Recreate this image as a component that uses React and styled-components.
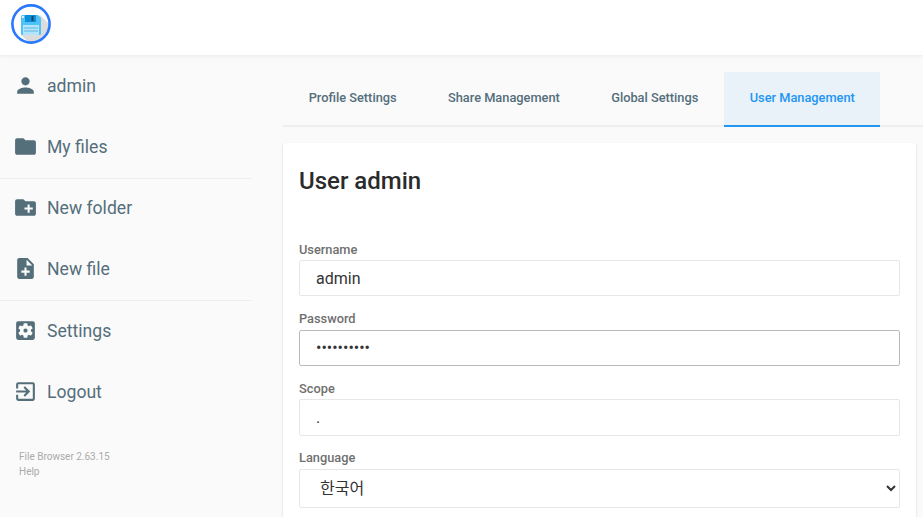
import React from "react";
import styled, { createGlobalStyle } from "styled-components";
import {
  MdPerson,
  MdFolder,
  MdCreateNewFolder,
  MdNoteAdd,
  MdSettingsApplications,
  MdExitToApp,
} from "react-icons/md";

const GlobalStyle = createGlobalStyle`
  html, body {
    margin: 0;
    height: 100%;
    overflow: hidden;
    background: #fafafa;
    font-family: Roboto, "Liberation Sans", sans-serif;
  }
  * { box-sizing: border-box; }
`;

const Logo = () => (
  <svg width="40" height="40" viewBox="0 0 40 40">
    <defs>
      <clipPath id="logo-disc">
        <circle cx="20" cy="20" r="18" />
      </clipPath>
    </defs>
    <circle cx="20" cy="20" r="18" fill="#fff" />
    <path d="M29 11 L42 24 V42 H22 L10 31z" fill="#dcdcdc" clipPath="url(#logo-disc)" />
    <path d="M10 12.5 Q10 11 11.5 11 H27 L30 14 V29.5 Q30 31 28.5 31 H11.5 Q10 31 10 29.5z" fill="#4fc3f7" />
    <rect x="14" y="11" width="11" height="7" fill="#0d8fd8" />
    <rect x="20.5" y="12" width="2" height="5" fill="#17466b" />
    <rect x="11" y="12" width="2" height="2" fill="#e1f5fe" />
    <rect x="12" y="21" width="16" height="10" fill="#b3e5fc" />
    <rect x="13" y="23.5" width="14" height="1" fill="#5fb4e0" />
    <rect x="13" y="26.5" width="14" height="1" fill="#5fb4e0" />
    <circle cx="20" cy="20" r="18.6" fill="none" stroke="#2979ff" strokeWidth="2.6" />
  </svg>
);

const App = () => {
  return (
    <Page>
      <GlobalStyle />
      <Header>
        <Logo />
      </Header>
      <Body>
        <Sidebar>
          <NavItem><MdPerson /><span>admin</span></NavItem>
          <NavItem><MdFolder /><span>My files</span></NavItem>
          <Divider />
          <NavItem><MdCreateNewFolder /><span>New folder</span></NavItem>
          <NavItem><MdNoteAdd /><span>New file</span></NavItem>
          <Divider $last />
          <NavItem><MdSettingsApplications /><span>Settings</span></NavItem>
          <NavItem><MdExitToApp /><span>Logout</span></NavItem>
          <Credits>
            <span>File Browser 2.63.15</span>
            <span>Help</span>
          </Credits>
        </Sidebar>
        <Main>
          <Tabs>
            <Tab>Profile Settings</Tab>
            <Tab>Share Management</Tab>
            <Tab>Global Settings</Tab>
            <Tab $active>User Management</Tab>
          </Tabs>
          <Card>
            <Title>User admin</Title>
            <Field>
              <Label>Username</Label>
              <Input type="text" defaultValue="admin" />
            </Field>
            <Field>
              <Label>Password</Label>
              <Input $focused type="password" defaultValue="1234567890" />
            </Field>
            <Field>
              <Label>Scope</Label>
              <Input type="text" defaultValue="." />
            </Field>
            <Field>
              <Label>Language</Label>
              <Select defaultValue="ko">
                <option value="ko">한국어</option>
              </Select>
            </Field>
          </Card>
        </Main>
      </Body>
    </Page>
  );
};

export default App;

const Page = styled.div`
  height: 517px;
  overflow: hidden;
  display: flex;
  flex-direction: column;
`;

const Header = styled.header`
  height: 55px;
  flex: none;
  display: flex;
  align-items: flex-start;
  padding: 4px 0 0 11px;
  background: #fff;
  box-shadow: 0 0 5px rgba(0, 0, 0, 0.1);
  position: relative;
  z-index: 1;
`;

const Body = styled.div`
  flex: 1;
  display: flex;
  min-height: 0;
`;

const Sidebar = styled.nav`
  width: 252px;
  flex: none;
  color: #546e7a;
`;

const NavItem = styled.div`
  height: 61px;
  display: flex;
  align-items: center;
  gap: 9px;
  padding-left: 13px;
  font-size: 17.6px;
  color: #546e7a;

  svg {
    width: 25px;
    height: 25px;
    flex: none;
  }
`;

const Divider = styled.div`
  height: 1px;
  margin: 1px 0 ${(p) => (p.$last ? "-1px" : "-2px")};
  background: #eee;
`;

const Credits = styled.div`
  display: flex;
  flex-direction: column;
  gap: 4px;
  margin-top: 29px;
  padding-left: 19px;
  font-size: 10px;
  color: #aaa;
`;

const Main = styled.main`
  flex: 1;
  min-width: 0;
  padding: 17px 7px 0 31px;
`;

const Tabs = styled.div`
  display: flex;
  height: 55px;
  margin-right: -7px;
  border-bottom: 2px solid #eee;
`;

const Tab = styled.div`
  height: 55px;
  display: flex;
  align-items: center;
  padding: 0 25.7px 2px;
  font-size: 12.8px;
  font-weight: 500;
  color: ${(p) => (p.$active ? "#2196f3" : "#546e7a")};
  background: ${(p) => (p.$active ? "#e9f1f9" : "transparent")};
  border-bottom: 2px solid ${(p) => (p.$active ? "#2196f3" : "transparent")};
`;

const Card = styled.section`
  margin-top: 16px;
  height: 400px;
  padding: 16px;
  background: #fff;
  border-radius: 2px;
  box-shadow: rgba(0, 0, 0, 0.06) 0 1px 3px, rgba(0, 0, 0, 0.12) 0 1px 2px;
`;

const Title = styled.h2`
  margin: 0 0 46.62px;
  padding-top: 8px;
  font-size: 24px;
  line-height: 28px;
  font-weight: 500;
  color: #2b2b2b;
`;

const Field = styled.div`
  margin-bottom: 14.82px;
`;

const Label = styled.label`
  display: block;
  font-size: 12.8px;
  line-height: 15px;
  font-weight: 500;
  color: #6f6f6f;
  margin-bottom: 3.38px;
`;

const Input = styled.input`
  display: block;
  width: 100%;
  height: 36.4px;
  padding: 0 16px;
  font-family: Roboto, sans-serif;
  font-size: 16px;
  color: #333;
  background: #fff;
  border: 1px solid ${(p) => (p.$focused ? "#bbb" : "#e6e6e6")};
  border-radius: 2px;
  outline: none;
`;

const Select = styled.select`
  display: block;
  width: 100%;
  height: 39px;
  padding: 0 16px;
  font-family: Roboto, "Noto Sans CJK KR", sans-serif;
  font-size: 16px;
  color: #333;
  background: #fff;
  border: 1px solid #e6e6e6;
  border-radius: 2px;
  outline: none;
`;
